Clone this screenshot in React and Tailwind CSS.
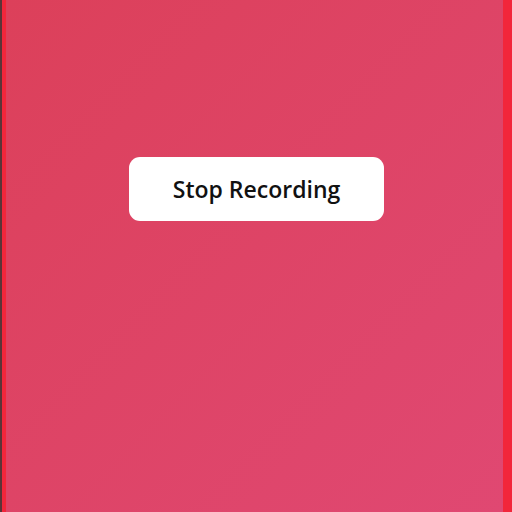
export default function App() {
  return (
    <div className="flex h-[512px] w-[512px] bg-[#f2263b]">
      <div className="w-[2px] bg-[#5b3438]" />
      <div className="w-[4px] bg-[#f2263b]" />
      <div className="flex flex-1 flex-col items-center bg-gradient-to-br from-[#dc405a] to-[#e04872] pt-[157px]">
        <button className="ml-[4px] flex h-[64px] w-[255px] items-center justify-center rounded-[11px] bg-white font-['Open_Sans',sans-serif] text-[23px] font-semibold text-[#111]">
          Stop Recording
        </button>
      </div>
      <div className="w-[9px] bg-[#f2263b]" />
    </div>
  );
}
